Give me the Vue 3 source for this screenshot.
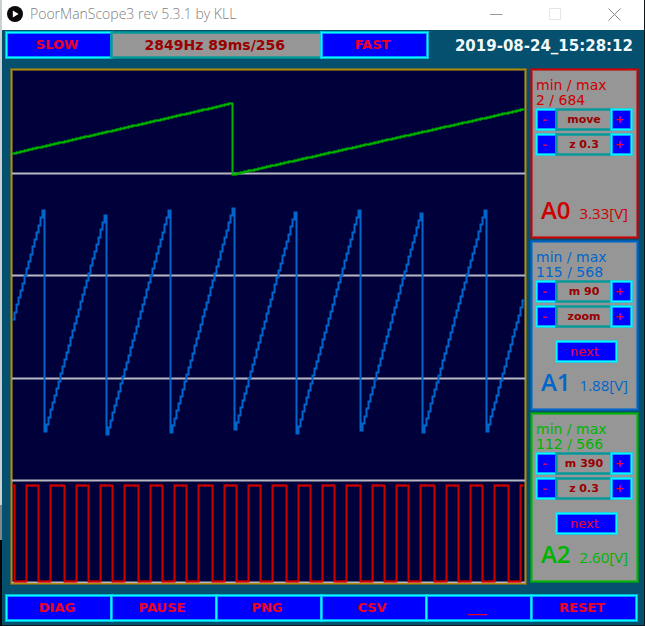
<script setup>
const channels = [
  { name: 'A0', tone: 'red', range: '2 / 684', move: 'move', zoom: 'z 0.3', volts: '3.33[V]', next: false },
  { name: 'A1', tone: 'azure', range: '115 / 568', move: 'm 90', zoom: 'zoom', volts: '1.88[V]', next: true },
  { name: 'A2', tone: 'green', range: '112 / 566', move: 'm 390', zoom: 'z 0.3', volts: '2.60[V]', next: true },
]
const commands = ['DIAG', 'PAUSE', 'PNG', 'CSV', '___', 'RESET']
const gridLines = [173.5, 275.5, 378.5, 480.5, 582.5]

// One ramp of samples, two units apart, drawn as a staircase.
function ramp(from, to, low, high) {
  const count = Math.round((to - from) / 2)
  let d = ''
  for (let k = 0; k < count; k++) {
    const y = Math.round(low + ((high - low) * k) / (count - 1)) + 0.5
    d += `V${y}H${from + (k + 1) * 2}`
  }
  return d
}

// Marks at every other unit, which give a trace its beaded look.
function beads(from, to, low, high) {
  let d = ''
  for (let x = from; x < to; x += 2) {
    const y = Math.round(low + ((high - low) * (x - from)) / (to - from)) + 0.5
    d += `M${x - 0.5} ${y}h1`
  }
  return d
}

const slowSaw = 'M12.5 153.5' + ramp(12.5, 232.5, 153, 103) + 'V174.5' + ramp(232.5, 524.5, 174, 109)
const slowBeads = beads(12.5, 232.5, 153, 103) + beads(232.5, 524.5, 174, 109)

const fastRamps = [
  [12.5, 44.5, 319, 210],
  [44.5, 106.5, 431, 215],
  [106.5, 170.5, 434, 210],
  [170.5, 234.5, 432, 208],
  [234.5, 296.5, 429, 212],
  [296.5, 360.5, 433, 210],
  [360.5, 422.5, 430, 213],
  [422.5, 486.5, 432, 210],
  [486.5, 524.5, 431, 300],
]
const fastSaw = 'M12.5 319.5' + fastRamps.map((r) => ramp(...r)).join('')

const edges = [
  14, 26, 38, 50, 64, 76, 88, 100, 112, 124, 138, 150, 162, 174, 186, 198, 212, 224, 236, 248, 260,
  272, 286, 298, 310, 322, 334, 346, 360, 372, 384, 396, 408, 420, 434, 446, 458, 470, 482, 494, 508, 520,
]
const square = 'M12.5 485.5' + edges.map((x, i) => `H${x + 0.5}V${i % 2 ? 485.5 : 581.5}`).join('') + 'H523.5'
const squareBeads = [12, ...edges]
  .map((x, i) => {
    const y = i % 2 ? 581 : 485
    return beads(x + 0.5, edges[i] ?? 524, y, y)
  })
  .join('')
</script>

<template>
  <div class="window">
    <header class="titlebar">
      <svg class="logo" viewBox="0 0 16 16" aria-hidden="true">
        <circle cx="8" cy="8" r="8" fill="#0a0a0a" />
        <path d="M5.8 4.4V11.6L11.6 8Z" fill="#fff" />
      </svg>
      <h1>PoorManScope3 rev 5.3.1 by KLL</h1>
      <div class="controls">
        <button type="button" aria-label="Minimize">
          <svg viewBox="0 0 13 13"><path d="M0 6.5H12.5" stroke="#999" /></svg>
        </button>
        <button type="button" aria-label="Maximize" disabled>
          <svg viewBox="0 0 13 13"><path d="M.5 .5H11.5V11.5H.5Z" stroke="#e6e6e6" /></svg>
        </button>
        <button type="button" aria-label="Close">
          <svg viewBox="0 0 13 13"><path d="M.5 .5L12.5 12.5M12.5 .5L.5 12.5" stroke="#888" /></svg>
        </button>
      </div>
    </header>

    <div class="app">
      <div class="topbar">
        <button type="button" class="key">SLOW</button>
        <output class="readout">2849Hz 89ms/256</output>
        <button type="button" class="key">FAST</button>
        <time>2019-08-24_15:28:12</time>
      </div>

      <main>
        <div class="plot line">
          <svg viewBox="12 70 513 513" role="img" aria-label="Oscilloscope traces">
            <path v-for="y in gridLines" :key="y" :d="`M12 ${y}H525`" class="trace grid" />
            <path :d="slowSaw" class="trace green" />
            <path :d="slowBeads" class="beads green" />
            <path :d="fastSaw" class="trace azure" />
            <path :d="square" class="trace red" />
            <path :d="squareBeads" class="beads red" />
          </svg>
        </div>

        <div class="channels">
          <section v-for="c in channels" :key="c.name" class="channel line" :class="c.tone">
            <p>min / max</p>
            <p>{{ c.range }}</p>
            <div class="stepper">
              <button type="button" class="key" :aria-label="`${c.name} move down`">-</button>
              <output class="readout">{{ c.move }}</output>
              <button type="button" class="key" :aria-label="`${c.name} move up`">+</button>
            </div>
            <div class="stepper">
              <button type="button" class="key" :aria-label="`${c.name} zoom out`">-</button>
              <output class="readout">{{ c.zoom }}</output>
              <button type="button" class="key" :aria-label="`${c.name} zoom in`">+</button>
            </div>
            <button v-if="c.next" type="button" class="key next">next</button>
            <div class="level">
              <h2>{{ c.name }}</h2>
              <span>{{ c.volts }}</span>
            </div>
          </section>
        </div>
      </main>

      <nav>
        <button v-for="c in commands" :key="c" type="button" class="key">{{ c }}</button>
      </nav>
    </div>
  </div>
</template>

<style>
body {
  margin: 0;
  background: #10181c;
}
</style>

<style scoped>
* {
  box-sizing: border-box;
}
.window {
  padding: 0 1px 1px 2px;
  background: linear-gradient(#c8d0d2 505px, #80868a 505px 540px, #060606 540px) left / 2px 100% no-repeat, #10181c;
  font-family: "DejaVu Sans", Verdana, sans-serif;
}
h1,
h2,
p {
  margin: 0;
  font-weight: 400;
}
.titlebar {
  display: flex;
  align-items: center;
  height: 30px;
  padding: 0 10px 2px 5px;
  background: #fff;
}
.logo {
  width: 16px;
  height: 16px;
  margin-right: 7px;
}
h1 {
  flex: 1;
  font: 300 14px/20px "Open Sans", sans-serif;
  color: #808080;
  white-space: nowrap;
}
.controls {
  display: flex;
  gap: 20px;
}
.controls button {
  display: flex;
  justify-content: center;
  width: 39px;
  padding: 0 13px;
  border: 0;
  background: none;
}
.controls svg {
  width: 13px;
  height: 13px;
  flex: none;
  fill: none;
}
.app {
  display: flex;
  flex-direction: column;
  gap: 11px;
  padding: 2px 6px 4px 4px;
  background: #04506e;
}

/* One solid line with a softer one on each side */
.line,
.key,
.readout {
  border: 1px solid var(--line);
  box-shadow: 0 0 0 1px var(--soft), inset 0 0 0 1px var(--soft);
}
.key {
  --line: #00ffff;
  --soft: #00e0ffb0;
  position: relative;
  padding: 0 4px 0 0;
  border-radius: 0;
  background: #0000ff;
  color: #f00020;
  font: 400 13px/16px "DejaVu Sans", Verdana, sans-serif;
  text-align: center;
}
.readout {
  --line: #009999;
  --soft: #009999b0;
  position: relative;
  display: flex;
  align-items: center;
  justify-content: center;
  margin: 0 -1px;
  background: #969696;
  color: #990000;
  font-weight: 700;
  white-space: nowrap;
}
.topbar {
  display: grid;
  grid-template-columns: 106fr 209fr 106fr 210fr;
  height: 26px;
  font-size: 14px;
}
.topbar .readout {
  padding-right: 4px;
}
.topbar .key,
.stepper .key,
nav .key {
  font-weight: 700;
}
time {
  align-self: center;
  padding: 2px 5px 0 0;
  color: #f2f8fa;
  font-size: 15px;
  font-weight: 700;
  line-height: 16px;
  text-align: right;
  white-space: nowrap;
}
main {
  display: flex;
  gap: 5px;
  padding-left: 5px;
}
.plot {
  --line: #b08c10;
  --soft: #8c7418b0;
  flex: 1;
  min-width: 0;
  background: #00003a;
}
.plot svg {
  display: block;
  width: 100%;
  height: auto;
}
.red {
  --line: #cc0000;
  --soft: #cc000090;
}
.azure {
  --line: #0066cc;
  --soft: #0066cc90;
}
.green {
  --line: #00b400;
  --soft: #00b40090;
}
.grid {
  --line: #b8b8c4;
}
.trace {
  fill: none;
  stroke: var(--line);
  stroke-width: 2;
}
.beads {
  stroke: var(--line);
  stroke-width: 3;
  opacity: 0.4;
}
.channels {
  display: grid;
  grid-template-rows: repeat(3, 1fr);
  gap: 3px;
  flex: none;
  width: 107px;
  padding-bottom: 2px;
}
.channel {
  display: flex;
  flex-direction: column;
  padding: 8px 5px 12px 4px;
  background: #969696;
  color: var(--line);
}
.channel p {
  font-size: 14px;
  line-height: 15px;
  white-space: nowrap;
}
.stepper {
  display: grid;
  grid-template-columns: 21px 1fr 21px;
  height: 21px;
  margin-top: 1px;
  font-size: 11px;
}
.stepper + .stepper {
  margin-top: 4px;
}
.stepper .key {
  font-size: 11px;
}
.next {
  width: 61px;
  height: 21px;
  margin: 14px 0 0 20px;
}
.level {
  display: flex;
  align-items: baseline;
  justify-content: space-between;
  margin-top: auto;
  padding: 0 4px 0 5px;
  font-family: "Open Sans", sans-serif;
  font-size: 15px;
  line-height: 24px;
}
.level h2 {
  font-size: 24px;
  font-weight: 600;
}
nav {
  display: grid;
  grid-template-columns: repeat(6, 1fr);
  height: 26px;
  padding-right: 1px;
  margin-right: 1px;
}
nav .key {
  margin-right: -1px;
}
</style>
